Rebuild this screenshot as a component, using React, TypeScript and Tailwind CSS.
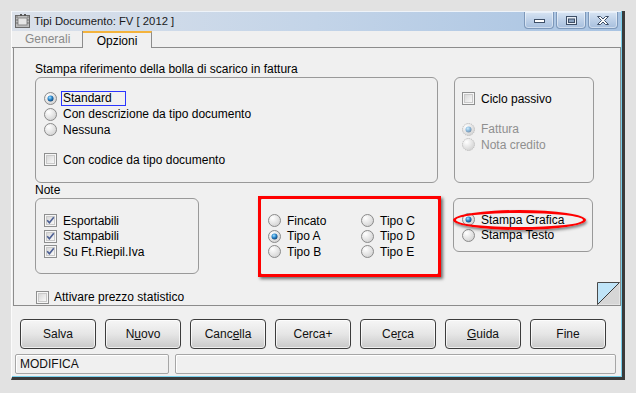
import React from 'react'

const F = "font-['Liberation_Sans',Arial,sans-serif]"

function Radio({ on, off }: { on?: boolean; off?: boolean }) {
  return (
    <svg width="13" height="13" viewBox="0 0 13 13" className="shrink-0">
      <defs>
        <radialGradient id="rface" cx="0.35" cy="0.3" r="0.8">
          <stop offset="0" stopColor="#ffffff" />
          <stop offset="1" stopColor="#cfcfcf" />
        </radialGradient>
        <radialGradient id="rdot" cx="0.4" cy="0.35" r="0.7">
          <stop offset="0" stopColor="#a6e3ff" />
          <stop offset="0.5" stopColor="#2a86cc" />
          <stop offset="1" stopColor="#0b3a69" />
        </radialGradient>
      </defs>
      <circle
        cx="6.5"
        cy="6.5"
        r="6"
        fill="url(#rface)"
        stroke={off ? '#bdbdbd' : '#8a8a8a'}
        strokeDasharray={off ? '1.4 0.9' : undefined}
      />
      {on && <circle cx="6.5" cy="6.5" r="3" fill="url(#rdot)" opacity={off ? 0.5 : 1} />}
    </svg>
  )
}

function Check({ on }: { on?: boolean }) {
  return (
    <svg width="13" height="13" viewBox="0 0 13 13" className="shrink-0">
      <defs>
        <linearGradient id="cface" x1="0" y1="0" x2="1" y2="1">
          <stop offset="0" stopColor="#d6d6d6" />
          <stop offset="1" stopColor="#fafafa" />
        </linearGradient>
      </defs>
      <rect x="0.5" y="0.5" width="12" height="12" fill="#f6f6f6" stroke="#8e8f8f" />
      <rect x="2.5" y="2.5" width="8" height="8" fill="url(#cface)" stroke="#c9c9c9" />
      {on && <path d="M3.2 6.2 L5.4 8.8 L9.8 3.2" fill="none" stroke="#4c5f93" strokeWidth="1.6" />}
    </svg>
  )
}

function Opt({
  kind,
  on,
  off,
  label,
  focus,
}: {
  kind: 'r' | 'c'
  on?: boolean
  off?: boolean
  label: string
  focus?: boolean
}) {
  return (
    <div className="flex items-center h-[15.5px]">
      {kind === 'r' ? <Radio on={on} off={off} /> : <Check on={on} />}
      {focus ? (
        <span className="ml-[4px] w-[65px] h-[15px] leading-[13px] border border-[#2a35ff] pl-px">{label}</span>
      ) : (
        <span className={`ml-[6px] ${off ? 'text-[#8f8f8f]' : ''}`}>{label}</span>
      )}
    </div>
  )
}

const box = 'border border-[#999] rounded-[6px]'

function WinBtn({ children }: { children: React.ReactNode }) {
  return (
    <div className="w-[30px] h-[17px] flex items-center justify-center rounded-b-[4px] border border-t-0 border-[#7d98ba] bg-gradient-to-b from-[#d7e4f3] to-[#a6bedd] shadow-[inset_0_0_0_1px_rgba(255,255,255,0.45)]">
      {children}
    </div>
  )
}

function Btn({ children }: { children: React.ReactNode }) {
  return (
    <div className="w-[76px] h-[30px] flex items-center justify-center rounded-[4px] border border-[#3c3c3c] bg-gradient-to-b from-[#f6f6f6] via-[#e6e6e6] to-[#c9c9c9] shadow-[inset_0_0_0_1px_rgba(255,255,255,0.7)] text-[12px] text-[#111]">
      {children}
    </div>
  )
}

export default function App() {
  return (
    <div className={`w-[636px] h-[393px] bg-[#e2e2e2] pt-[11px] pl-[11px] ${F} text-[12px] text-black`}>
      <div className="w-[614px] border-l border-l-[#fbfbfb] border-b-[3px] border-r-[3px] border-[#3a3a3a]">
        <div className="border-r border-b border-[#78d0ec] bg-[#f0f0f0] h-[366px] flex flex-col">
          {/* title bar */}
          <div className="h-[20px] flex items-start bg-gradient-to-r from-[#dbe1ea] via-[#c3d4e8] to-[#a8c3e2] border-t border-t-[#eef3f9]">
            <svg width="15" height="15" viewBox="0 0 15 15" className="ml-[3px] mt-[2px]">
              <rect x="0.5" y="1.5" width="14" height="12" fill="#bdbdbd" stroke="#6a6a6a" />
              <rect x="3" y="4" width="9" height="7" fill="#e6e6e6" stroke="#8a8a8a" />
              <rect x="1.5" y="2.5" width="1" height="1" fill="#333" />
              <rect x="1.5" y="5.5" width="1" height="1" fill="#333" />
              <rect x="1.5" y="8.5" width="1" height="1" fill="#333" />
              <rect x="12.5" y="2.5" width="1" height="1" fill="#333" />
              <rect x="12.5" y="5.5" width="1" height="1" fill="#333" />
              <rect x="12.5" y="8.5" width="1" height="1" fill="#333" />
              <rect x="5" y="0" width="2" height="2" fill="#555" />
              <rect x="9" y="0" width="2" height="2" fill="#555" />
            </svg>
            <span className="ml-[4px] mt-[2px] text-[11.3px] leading-[15px] text-[#1a1a1a]">Tipi Documento: FV [ 2012 ]</span>
            <div className="ml-auto mr-[3px] flex gap-[2px]">
              <WinBtn>
                <svg width="11" height="8" viewBox="0 0 11 8">
                  <rect x="0.5" y="3.5" width="10" height="3" fill="#fff" stroke="#3e4f67" />
                </svg>
              </WinBtn>
              <WinBtn>
                <svg width="11" height="9" viewBox="0 0 11 9">
                  <rect x="0.5" y="0.5" width="10" height="8" fill="#e9eff7" stroke="#3e4f67" />
                  <rect x="2.5" y="3" width="6" height="3.5" fill="#8aa2c0" stroke="#3e4f67" />
                </svg>
              </WinBtn>
              <WinBtn>
                <svg width="12" height="9" viewBox="0 0 12 9">
                  <path
                    d="M0.5 0.5 H3.5 L6 3 L8.5 0.5 H11.5 L7.5 4.5 L11.5 8.5 H8.5 L6 6 L3.5 8.5 H0.5 L4.5 4.5 Z"
                    fill="#fff"
                    stroke="#3e4f67"
                  />
                </svg>
              </WinBtn>
            </div>
          </div>

          {/* tabs */}
          <div className="h-[17px] flex">
            <div className="w-[71px] border-b border-r border-[#8c8c8c] flex items-center pl-[13px] text-[#8a8a8a]">Generali</div>
            <div className="w-[69px] border-t-2 border-t-[#f4b33c] border-r border-r-[#8c8c8c] flex items-center justify-center leading-[14px]">Opzioni</div>
            <div className="flex-1 border-b border-[#8c8c8c]" />
          </div>

          {/* panel */}
          <div className="ml-px w-[608px] h-[258px] border-l border-r border-b border-[#8c8c8c] relative pt-[14px] pl-[21px]">
            <div className="h-[15px] leading-[15px]">Stampa riferimento della bolla di scarico in fattura</div>
            <div className="flex">
              <div className={`${box} w-[403px] h-[106px] pl-[8px] pt-[13px]`}>
                <Opt kind="r" on focus label="Standard" />
                <Opt kind="r" label="Con descrizione da tipo documento" />
                <Opt kind="r" label="Nessuna" />
                <div className="mt-[14.5px]">
                  <Opt kind="c" label="Con codice da tipo documento" />
                </div>
              </div>
              <div className={`${box} ml-[16px] w-[140px] h-[106px] pl-[7px] pt-[13px]`}>
                <Opt kind="c" label="Ciclo passivo" />
                <div className="mt-[15px]">
                  <Opt kind="r" on off label="Fattura" />
                  <Opt kind="r" off label="Nota credito" />
                </div>
              </div>
            </div>

            <div className="flex items-start">
              <div>
                <div className="h-[15px] leading-[15px]">Note</div>
                <div className={`${box} w-[164px] h-[76px] pl-[8px] pt-[14px]`}>
                  <Opt kind="c" on label="Esportabili" />
                  <Opt kind="c" on label="Stampabili" />
                  <Opt kind="c" on label="Su Ft.Riepil.Iva" />
                </div>
              </div>
              <div className={`${box} relative ml-[60px] mt-[14px] w-[181px] h-[79px] pl-[8px] pt-[15px] flex`}>
                <div className="w-[93px]">
                  <Opt kind="r" label="Fincato" />
                  <Opt kind="r" on label="Tipo A" />
                  <Opt kind="r" label="Tipo B" />
                </div>
                <div>
                  <Opt kind="r" label="Tipo C" />
                  <Opt kind="r" label="Tipo D" />
                  <Opt kind="r" label="Tipo E" />
                </div>
                <div className="absolute -inset-[2px] border-[3px] border-[#ff0000] shadow-[2px_2px_3px_rgba(0,0,0,0.55)]" />
              </div>
              <div className={`${box} relative ml-[13px] mt-[15px] w-[140px] h-[54px] pl-[8px] pt-[13px]`}>
                <Opt kind="r" on label="Stampa Grafica" />
                <Opt kind="r" label="Stampa Testo" />
                <div className="absolute left-[-1px] top-[11px] w-[133px] h-[20px] rounded-[50%] border-[3px] border-[#ff0000] shadow-[1px_2px_3px_rgba(0,0,0,0.45)]" />
              </div>
            </div>

            <div className="mt-[13px] ml-px h-[16px] flex items-center">
              <Check />
              <span className="ml-[5px]">Attivare prezzo statistico</span>
            </div>

            <svg width="23" height="23" viewBox="0 0 23 23" className="absolute right-0 bottom-0">
              <path d="M0.5 22.5 V0.5 H22.5 Z" fill="#bfe4f8" />
              <path d="M0.5 22.5 L22.5 0.5 V22.5 Z" fill="#d6d6d6" />
              <path d="M0.5 22.5 V0.5 H22.5" fill="none" stroke="#4a4a4a" />
              <path d="M0.5 22.5 L22.5 0.5" stroke="#3a3a3a" />
            </svg>
          </div>

          {/* buttons */}
          <div className="mt-[13px] pl-[8px] flex gap-[9px]">
            <Btn>Salva</Btn>
            <Btn>
              <span>N<u>u</u>ovo</span>
            </Btn>
            <Btn>
              <span>Canc<u>e</u>lla</span>
            </Btn>
            <Btn>Cerca+</Btn>
            <Btn>
              <span>Ce<u>r</u>ca</span>
            </Btn>
            <Btn>
              <span><u>G</u>uida</span>
            </Btn>
            <Btn>Fine</Btn>
          </div>

          {/* status */}
          <div className="mt-[5px] ml-[3px] flex gap-[6px]">
            <div className="w-[154px] h-[20px] border border-[#a6a6a6] rounded-[2px] pl-[4px] leading-[18px] text-[#111] shadow-[inset_1px_1px_0_#fff]">MODIFICA</div>
            <div className="w-[441px] h-[20px] border border-[#a6a6a6] rounded-[2px] shadow-[inset_1px_1px_0_#fff]" />
          </div>
        </div>
      </div>
    </div>
  )
}
